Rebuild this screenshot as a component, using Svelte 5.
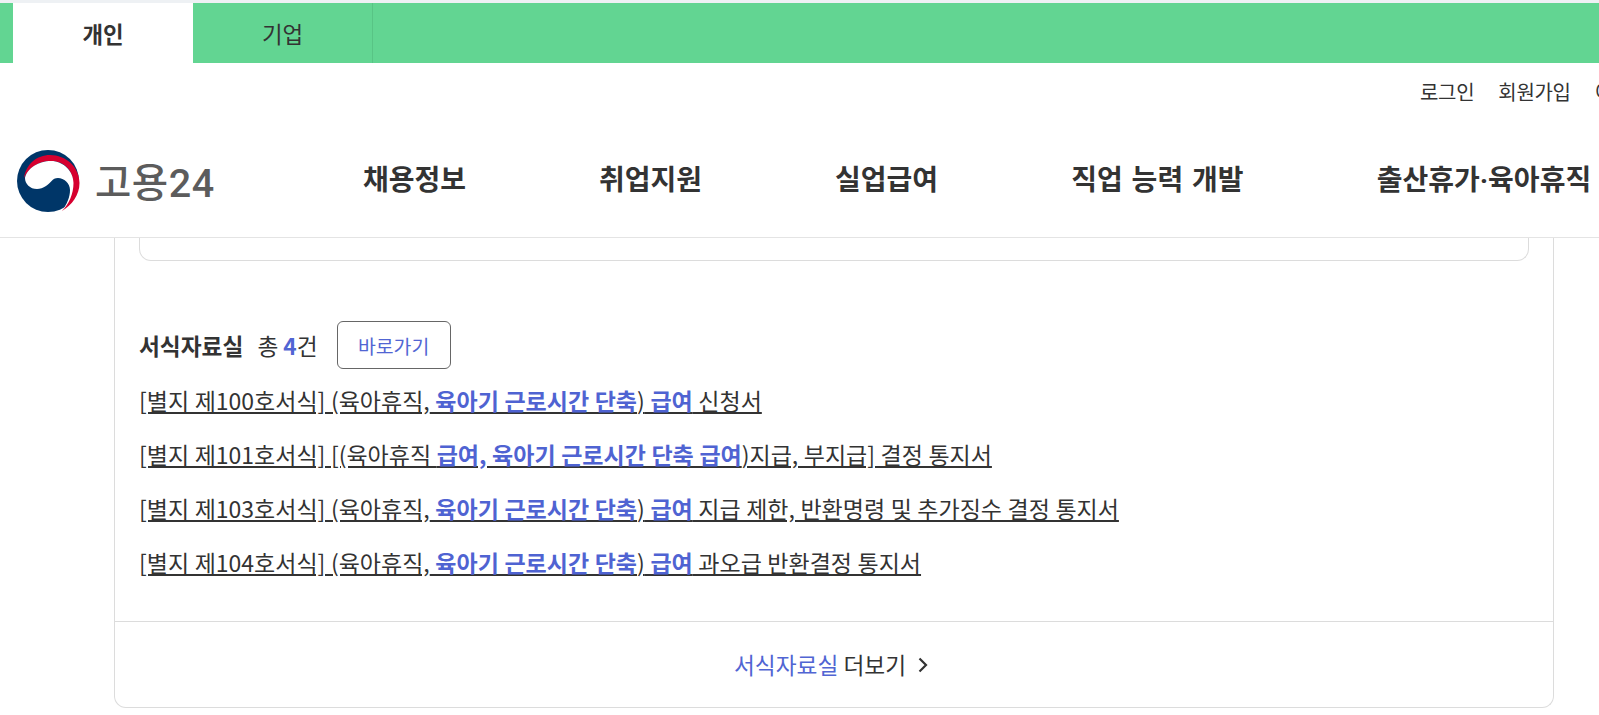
<script>
  const tabs = ["개인", "기업"];
  const nav = ["채용정보", "취업지원", "실업급여", "직업 능력 개발", "출산휴가·육아휴직"];
  const forms = [
    [["[별지 제100호서식] (육아휴직,", 0], [" 육아기 근로시간 단축", 1], [")", 0], [" 급여", 1], [" 신청서", 0]],
    [["[별지 제101호서식] [(육아휴직 ", 0], ["급여, 육아기 근로시간 단축 급여", 1], [")지급, 부지급] 결정 통지서", 0]],
    [["[별지 제103호서식] (육아휴직,", 0], [" 육아기 근로시간 단축", 1], [")", 0], [" 급여", 1], [" 지급 제한, 반환명령 및 추가징수 결정 통지서", 0]],
    [["[별지 제104호서식] (육아휴직,", 0], [" 육아기 근로시간 단축", 1], [")", 0], [" 급여", 1], [" 과오급 반환결정 통지서", 0]]
  ];
</script>

<style>
  :global(body) {
    font-family: "Noto Sans CJK KR", "Noto Sans", sans-serif;
    color: #333;
    background: #fff;
    overflow: hidden;
  }

  .page {
    width: 1599px;
    height: 715px;
    overflow: hidden;
  }

  .strip {
    height: 3px;
    background: #eef1f4;
  }

  .topbar {
    display: flex;
    height: 60px;
    padding-left: 13px;
    background: #62d592;
  }

  .tab {
    width: 180px;
    display: flex;
    align-items: center;
    justify-content: center;
    font-size: 22.4px;
    color: #333;
    border-right: 1px solid #58c485;
    box-sizing: border-box;
  }

  .tab.on {
    background: #fff;
    font-weight: 700;
    border-right: 0;
  }

  .util {
    display: flex;
    gap: 24px;
    height: 56px;
    padding-left: 1420px;
    align-items: center;
    font-size: 20px;
    letter-spacing: -0.3px;
    white-space: nowrap;
    overflow: hidden;
  }

  .mainbar {
    display: flex;
    align-items: center;
    height: 119px;
    border-bottom: 1px solid #e4e4e4;
    padding-left: 16px;
    white-space: nowrap;
    box-sizing: border-box;
  }

  .logo {
    display: flex;
    align-items: center;
    gap: 15px;
    width: 347px;
    flex: none;
    padding-top: 2px;
    box-sizing: border-box;
    color: #5c5c5c;
    font-family: Roboto, "Noto Sans CJK KR", sans-serif;
    font-size: 39.5px;
    font-weight: 500;
    letter-spacing: 0.5px;
  }

  .logo svg {
    margin-top: 4px;
  }

  nav {
    display: flex;
    font-family: Roboto, "Noto Sans CJK KR", sans-serif;
    font-size: 28px;
    font-weight: 700;
    word-spacing: 2px;
    color: #333;
    gap: 133px;
  }

  main {
    padding: 0 45px 0 114px;
  }

  .card {
    border: 1px solid #dcdcdc;
    border-top: 0;
    border-radius: 0 0 12px 12px;
    height: 470px;
    box-sizing: border-box;
    display: flex;
    flex-direction: column;
  }

  .inner {
    height: 22px;
    margin: 0 24px;
    border: 1px solid #dcdcdc;
    border-top: 0;
    border-radius: 0 0 12px 12px;
  }

  .body {
    flex: 1;
    padding: 60px 24px 0;
  }

  .head {
    display: flex;
    align-items: center;
    font-size: 22.7px;
    height: 48px;
    margin-bottom: 4px;
  }

  .head strong {
    font-weight: 700;
    margin-right: 14px;
  }

  .head b {
    color: #5165d3;
  }

  .go {
    margin-left: 19px;
    width: 114px;
    height: 48px;
    border: 1px solid #666;
    border-radius: 6px;
    background: #fff;
    color: #5165d3;
    font: inherit;
    font-size: 19.4px;
  }

  ul {
    list-style: none;
    margin: 0;
    padding: 0;
  }

  li {
    height: 54px;
    line-height: 54px;
    font-size: 23px;
    word-spacing: 0.4px;
    white-space: nowrap;
  }

  li a {
    color: #333;
    text-decoration: underline;
  }

  li b {
    color: #4f63d2;
  }

  .more {
    height: 85px;
    border-top: 1px solid #dcdcdc;
    display: flex;
    align-items: center;
    justify-content: center;
    gap: 12px;
    font-size: 22.7px;
    padding-right: 6px;
  }

  .more span span {
    color: #5165d3;
  }
</style>

<div class="page">
  <div class="strip"></div>
  <div class="topbar">
    {#each tabs as tab, i}
      <div class="tab" class:on={i === 0}>{tab}</div>
    {/each}
  </div>

  <div class="util">
    <span>로그인</span>
    <span>회원가입</span>
    <span>이용안내</span>
  </div>

  <div class="mainbar">
    <div class="logo">
      <svg width="64" height="62" viewBox="0 0 64 62">
        <circle cx="32" cy="31" r="31" fill="#003668" />
        <path d="M8 28C10 14 21 5 34 5C50 5 63.5 17 63.5 33C63.5 45 56 55 46 61C52 54 57 44 57 33C57 20 48 11 35 11C23 11 13 17 8 28Z" fill="#d6002f" />
        <path d="M9 28C11 18 23 11 35 11C47 11 57.5 21 57.5 33C57.5 44 53 54 46 61C51 54 54 47 54 40C54 33 48 28 42 28C36 28 35 33 30 36C27 38 24 39 21 39C14 39 9 34 9 28Z" fill="#fff" />
      </svg>
      <span>고용24</span>
    </div>
    <nav>
      {#each nav as item}
        <span>{item}</span>
      {/each}
    </nav>
  </div>

  <main>
    <div class="card">
      <div class="inner"></div>
      <div class="body">
        <div class="head">
          <strong>서식자료실</strong>
          <span>총 <b>4</b>건</span>
          <button class="go">바로가기</button>
        </div>
        <ul>
          {#each forms as row}
            <li>
              <a href="#top">{#each row as part}{#if part[1]}<b>{part[0]}</b>{:else}{part[0]}{/if}{/each}</a>
            </li>
          {/each}
        </ul>
      </div>
      <div class="more">
        <span><span>서식자료실</span> 더보기</span>
        <svg width="10" height="16" viewBox="0 0 10 16">
          <path d="M1.5 1.5L8 8L1.5 14.5" fill="none" stroke="#333" stroke-width="2.2" />
        </svg>
      </div>
    </div>
  </main>
</div>
